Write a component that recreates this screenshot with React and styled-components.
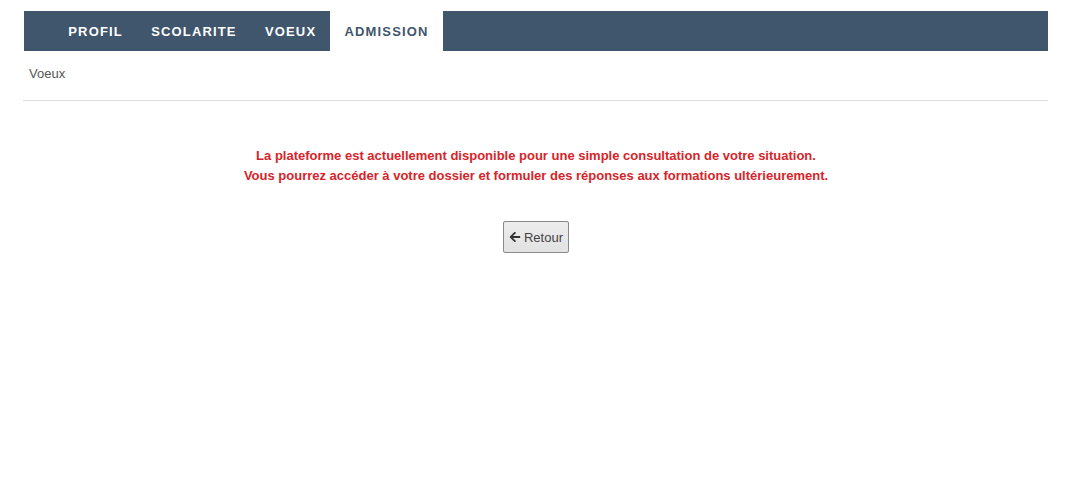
import React from "react";
import styled, { createGlobalStyle } from "styled-components";

const Global = createGlobalStyle`
  html, body { margin: 0; padding: 0; background: #fff; }
  body { font-family: "Liberation Sans", Arial, sans-serif; }
`;

const Page = styled.div`
  width: 1024px;
  margin: 0 0 0 24px;
  padding-top: 11px;
`;

const NavBar = styled.nav`
  display: flex;
  height: 40px;
  background: #3f566d;
  padding-left: 30px;
`;

const NavItem = styled.a`
  display: flex;
  align-items: center;
  padding: 0 14px 0 14.3px;
  font-size: 13px;
  font-weight: bold;
  letter-spacing: 1.15px;
  text-decoration: none;
  color: ${(p) => (p.$active ? "#3f566d" : "#fff")};
  background: ${(p) => (p.$active ? "#fff" : "transparent")};
`;

const Breadcrumb = styled.div`
  padding: 15px 0 0 6px;
  height: 34px;
  font-size: 13px;
  color: #555;
  border-bottom: 1px solid #dcdcdc;
  margin-left: -1px;
`;

const Message = styled.div`
  margin-top: 45px;
  text-align: center;
  color: #d7242a;
  font-size: 13px;
  font-weight: bold;
  line-height: 19.5px;
`;

const Actions = styled.div`
  display: flex;
  justify-content: center;
  margin-top: 36px;
`;

const Button = styled.button`
  display: flex;
  align-items: center;
  gap: 3px;
  height: 32px;
  width: 66px;
  padding: 0 5px;
  justify-content: center;
  font-family: "Liberation Sans", Arial, sans-serif;
  font-size: 13px;
  color: #444;
  background: linear-gradient(#ececec, #e2e2e2);
  border: 1px solid #8a8a8a;
  border-radius: 2px;
`;

export default function App() {
  return (
    <>
      <Global />
      <Page>
        <NavBar>
          <NavItem>PROFIL</NavItem>
          <NavItem>SCOLARITE</NavItem>
          <NavItem>VOEUX</NavItem>
          <NavItem $active>ADMISSION</NavItem>
        </NavBar>
        <Breadcrumb>Voeux</Breadcrumb>
        <Message>
          La plateforme est actuellement disponible pour une simple consultation de votre situation.
          <br />
          Vous pourrez accéder à votre dossier et formuler des réponses aux formations ultérieurement.
        </Message>
        <Actions>
          <Button>
            <svg width="12" height="12" viewBox="0 0 448 512" fill="#333">
              <path d="M257.5 445.1l-22.2 22.2c-9.4 9.4-24.6 9.4-33.9 0L7 273c-9.4-9.4-9.4-24.6 0-33.9L201.4 44.7c9.4-9.4 24.600-9.4 33.9 0l22.2 22.2c9.5 9.5 9.3 25-.4 34.3L136.6 216H424c13.3 0 24 10.7 24 24v32c0 13.3-10.7 24-24 24H136.6l120.5 114.8c9.8 9.3 10 24.8.4 34.3z" />
            </svg>
            Retour
          </Button>
        </Actions>
      </Page>
    </>
  );
}
